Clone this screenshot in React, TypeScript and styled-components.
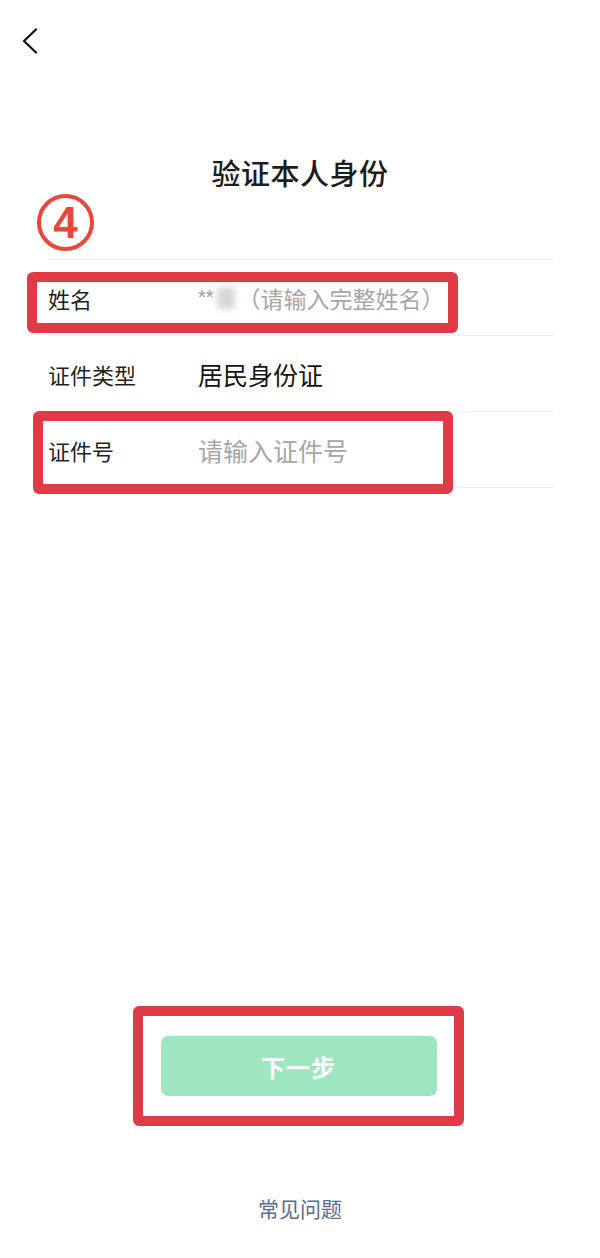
import * as React from 'react';
import styled, { createGlobalStyle } from 'styled-components';

const GlobalStyle = createGlobalStyle`
  html, body {
    margin: 0;
    padding: 0;
    background: #ffffff;
  }
  body {
    font-family: "Noto Sans CJK SC", "Noto Sans", sans-serif;
    color: #1a1a1a;
  }
`;

const annotationRed = '#e03a46';

const Page = styled.div`
  display: flex;
  flex-direction: column;
  min-height: 1258px;
  background: #fff;
`;

const Header = styled.div`
  height: 80px;
  padding: 28px 0 0 22px;
  box-sizing: border-box;
`;

const BackButton = styled.button`
  border: none;
  background: none;
  padding: 0;
  width: 16px;
  height: 26px;
  cursor: pointer;
  display: block;
`;

const Title = styled.h1`
  margin: 70px 0 0;
  text-align: center;
  font-size: 29px;
  line-height: 44px;
  font-weight: 500;
  color: #1c1c1c;
  letter-spacing: 0.5px;
`;

const StepMark = styled.div`
  margin: 0 0 8px 37px;
  width: 57px;
  height: 57px;
  box-sizing: border-box;
  border: 4px solid #e6493b;
  border-radius: 50%;
  display: flex;
  align-items: center;
  justify-content: center;
  font-family: "Liberation Sans", Arial, sans-serif;
  font-weight: 700;
  font-size: 44px;
  color: #e6493b;
  line-height: 1;
`;

const Form = styled.div`
  margin: 0 47px 0 48px;
`;

const Row = styled.div`
  position: relative;
  display: flex;
  align-items: center;
  height: 75px;
  border-top: 1px solid #efefef;
  &:last-child {
    border-bottom: 1px solid #efefef;
  }
`;

const Label = styled.span`
  width: 150px;
  flex-shrink: 0;
  font-size: 22px;
  color: #1f1f1f;
`;

const Value = styled.span<{ $placeholder?: boolean; $size?: number }>`
  font-size: ${(p) => p.$size ?? 25}px;
  color: ${(p) => (p.$placeholder ? '#a6a6a6' : '#141414')};
  white-space: nowrap;
  display: flex;
  align-items: center;
`;

const Masked = styled.span`
  font-size: 20px;
  color: #9a9a9a;
  font-family: "Liberation Sans", Arial, sans-serif;
`;

const Blur = styled.span`
  display: inline-block;
  width: 18px;
  height: 22px;
  margin: 0 3px 0 3px;
  background: #d8d8d8;
  filter: blur(3px);
`;

const Highlight = styled.div<{ $left: number; $top: number; $width: number; $height: number }>`
  position: absolute;
  left: ${(p) => p.$left}px;
  top: ${(p) => p.$top}px;
  width: ${(p) => p.$width}px;
  height: ${(p) => p.$height}px;
  box-sizing: border-box;
  border: 10px solid ${annotationRed};
  border-radius: 6px;
  pointer-events: none;
`;

const Footer = styled.div`
  margin-top: auto;
  display: flex;
  flex-direction: column;
  align-items: center;
  padding-bottom: 35px;
`;

const ButtonFrame = styled.div`
  box-sizing: border-box;
  width: 331px;
  border: 10px solid ${annotationRed};
  border-radius: 6px;
  padding: 20px 0;
  display: flex;
  justify-content: center;
  margin-left: -3px;
`;

const NextButton = styled.button`
  width: 276px;
  height: 60px;
  border: none;
  border-radius: 7px;
  background: #9de6bf;
  color: #ffffff;
  font-family: "Noto Sans CJK SC", sans-serif;
  font-size: 24px;
  font-weight: 700;
  letter-spacing: 1px;
  cursor: pointer;
`;

const HelpLink = styled.a`
  margin-top: 67px;
  font-size: 21px;
  line-height: 30px;
  color: #5a6a8c;
  text-decoration: none;
  cursor: pointer;
`;

const App: React.FC = () => {
  return (
    <Page>
      <GlobalStyle />
      <Header>
        <BackButton aria-label="返回">
          <svg width="16" height="26" viewBox="0 0 16 26">
            <polyline
              points="14,1.5 2,13 14,24.5"
              fill="none"
              stroke="#111"
              strokeWidth="2.2"
              strokeLinecap="round"
              strokeLinejoin="round"
            />
          </svg>
        </BackButton>
      </Header>

      <Title>验证本人身份</Title>
      <StepMark>4</StepMark>

      <Form>
        <Row>
          <Label>姓名</Label>
          <Value $placeholder $size={23}>
            <Masked>**</Masked>
            <Blur />
            （请输入完整姓名）
          </Value>
          <Highlight $left={-21} $top={12} $width={431} $height={61} />
        </Row>
        <Row>
          <Label>证件类型</Label>
          <Value>居民身份证</Value>
        </Row>
        <Row>
          <Label>证件号</Label>
          <Value $placeholder>请输入证件号</Value>
          <Highlight $left={-15} $top={-1} $width={420} $height={83} />
        </Row>
      </Form>

      <Footer>
        <ButtonFrame>
          <NextButton>下一步</NextButton>
        </ButtonFrame>
        <HelpLink>常见问题</HelpLink>
      </Footer>
    </Page>
  );
};

export default App;
